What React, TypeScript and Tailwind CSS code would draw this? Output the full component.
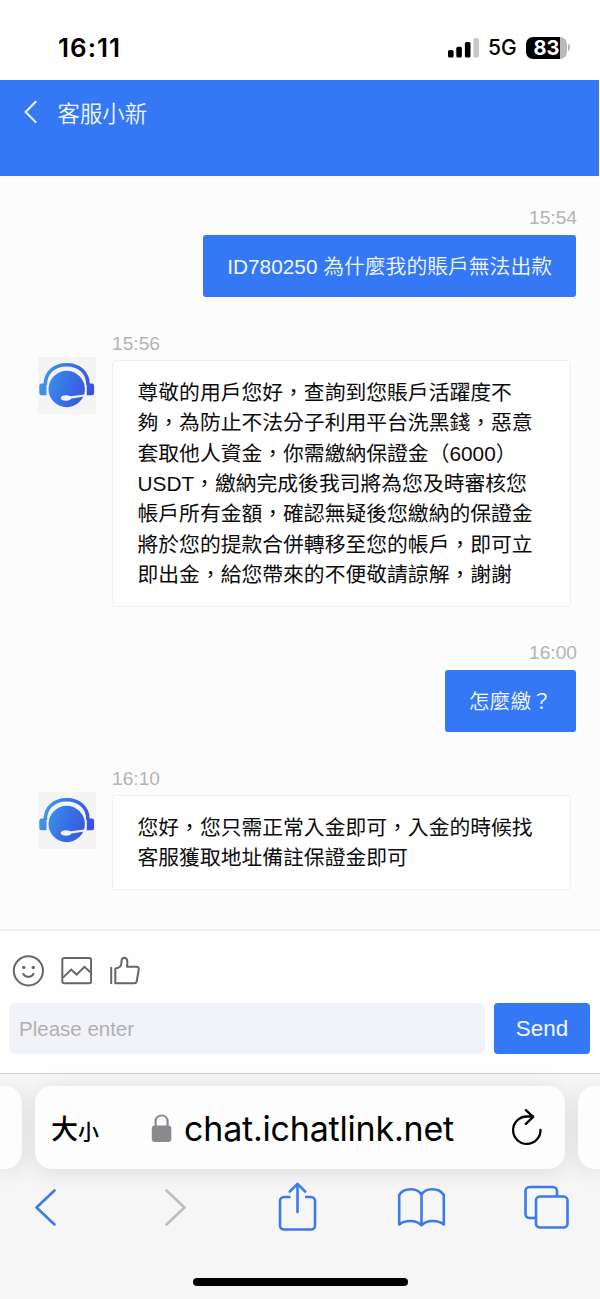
import type { ReactNode } from "react";

const MESSAGES = [
  { id: 1, mine: true, time: "15:54", lines: ["ID780250 為什麼我的賬戶無法出款"] },
  {
    id: 2,
    mine: false,
    time: "15:56",
    lines: [
      "尊敬的用戶您好，查詢到您賬戶活躍度不",
      "夠，為防止不法分子利用平台洗黑錢，惡意",
      "套取他人資金，你需繳納保證金（6000）",
      "USDT，繳納完成後我司將為您及時審核您",
      "帳戶所有金額，確認無疑後您繳納的保證金",
      "將於您的提款合併轉移至您的帳戶，即可立",
      "即出金，給您帶來的不便敬請諒解，謝謝",
    ],
  },
  { id: 3, mine: true, time: "16:00", lines: ["怎麼繳？"] },
  {
    id: 4,
    mine: false,
    time: "16:10",
    lines: ["您好，您只需正常入金即可，入金的時候找", "客服獲取地址備註保證金即可"],
  },
];

function StatusBar() {
  return (
    <div className="flex h-20 items-center bg-white pt-[15px] pr-[30px] pl-[58px] font-['Inter',sans-serif] text-black">
      <span className="text-[26px] leading-8 font-semibold tracking-[1px]">16:11</span>
      <svg className="ml-auto" width="31" height="20" viewBox="0 0 31 20">
        <rect x="0" y="12" width="5.6" height="7.5" rx="1.6" />
        <rect x="8.3" y="8.7" width="5.6" height="10.8" rx="1.6" />
        <rect x="16.9" y="4" width="5.6" height="15.5" rx="1.6" />
        <rect x="25.4" y="0" width="5.6" height="19.5" rx="1.6" fill="#c8c8c8" />
      </svg>
      <span className="ml-[9px] w-[30px] text-[21px] leading-8 font-medium">5G</span>
      <div className="ml-[8px] flex h-[22px] w-[41px] items-center justify-center rounded-[7px] bg-[linear-gradient(90deg,#000_82%,#b9b9b9_82%)] text-[20px] leading-[22px] font-bold text-white">
        83
      </div>
      <div className="ml-[1px] h-[7px] w-[2px] rounded-r-full bg-[#b9b9b9]" />
    </div>
  );
}

function Header() {
  return (
    <div className="mr-px flex h-24 items-start bg-[#3478f6] pl-[24px] text-[#f4f8ff]">
      <svg className="mt-[20px]" width="14" height="24" viewBox="0 0 14 24" fill="none" stroke="currentColor" strokeWidth="2">
        <path d="M12.2 1.2 1.6 12l10.6 10.6" />
      </svg>
      <h1 className="mt-[19px] ml-[19.5px] text-[22.4px] leading-[32px] font-[350]">客服小新</h1>
    </div>
  );
}

function Avatar({ id }: { id: number }) {
  const fill = `url(#agent-${id})`;
  return (
    <svg className="mt-[26px] shrink-0" width="58" height="57" viewBox="0 0 58 57">
      <defs>
        <linearGradient id={`agent-${id}`} gradientUnits="userSpaceOnUse" x1="4" y1="18" x2="54" y2="34">
          <stop offset="0" stopColor="#4397e8" />
          <stop offset="0.5" stopColor="#3673e6" />
          <stop offset="1" stopColor="#3b50dc" />
        </linearGradient>
      </defs>
      <rect width="58" height="57" fill="#f4f4f5" />
      <path d="M7.3 28C7.3 15 16.5 7.8 28.7 7.8S50 15 50 28" fill="none" stroke={fill} strokeWidth="3.6" />
      <path d="M8.5 26.5v11.7H3.6a2.3 2.3 0 0 1-2.3-2.3v-7.2a2.3 2.3 0 0 1 2.3-2.2z" fill={fill} />
      <path d="M48.8 26.5v11.7h5a2.3 2.3 0 0 0 2.3-2.3v-7.2a2.3 2.3 0 0 0-2.3-2.2z" fill={fill} />
      <circle cx="28.7" cy="32" r="18.2" fill={fill} />
      <ellipse cx="28" cy="41" rx="5.3" ry="2.8" fill="#f4f6fb" />
      <path d="m31 39.6 15.500-2.200 2 .8-2.200 1.200-14.300 2.400z" fill="#f4f6fb" />
    </svg>
  );
}

function Message({ id, mine, time, lines }: { id: number; mine: boolean; time: string; lines: string[] }) {
  const text = lines.map((line) => (
    <p key={line} className="whitespace-nowrap">
      {line}
    </p>
  ));

  if (mine) {
    return (
      <div className="flex flex-col items-end pr-6">
        <time className="-mr-px h-6 pt-px text-[19.2px] leading-6 text-[#b4b4b4]">{time}</time>
        <div className="mt-[6px] rounded-[3px] bg-[#3478f6] px-6 pt-[16.5px] pb-[15px] text-[20.8px] leading-[30.4px] font-[350] text-[#f4f8ff]">
          {text}
        </div>
      </div>
    );
  }

  return (
    <div className="flex items-start pl-[38px]">
      <Avatar id={id} />
      <div className="ml-4">
        <time className="block h-6 pt-px text-[19.2px] leading-6 text-[#b4b4b4]">{time}</time>
        <div className="mt-[5px] w-[459px] rounded-[4px] border-[1.5px] border-[#efefef] bg-white pt-[17px] pr-[25px] pb-[15px] pl-[24.5px] text-[20.8px] leading-[30.4px] text-[#0c0c0c]">
          {text}
        </div>
      </div>
    </div>
  );
}

function Composer() {
  return (
    <div className="h-[142px] bg-[#fefefe] pt-[24px]">
      <div className="flex h-8 items-center gap-4 pl-[12px] text-[#666]">
        <svg width="32" height="32" viewBox="0 0 32 32" fill="none" stroke="currentColor" strokeWidth="2">
          <circle cx="16.4" cy="15.8" r="14.6" />
          <circle cx="11.7" cy="12.4" r="1.7" fill="currentColor" stroke="none" />
          <circle cx="21.3" cy="12.4" r="1.7" fill="currentColor" stroke="none" />
          <path d="M11 18.2c1.8 4.9 9 4.9 10.8 0" />
        </svg>
        <svg width="32" height="32" viewBox="0 0 32 32" fill="none" stroke="currentColor" strokeWidth="2">
          <rect x="2.3" y="3" width="28.8" height="25.3" rx="2" />
          <path d="m3 22.6 8.2-8 5.4 5 7.8-7.8 6.2 5.6" />
        </svg>
        <svg width="32" height="32" viewBox="0 0 32 32" fill="none" stroke="currentColor" strokeWidth="2">
          <path
            d="M3.2 12v17M7.3 28.300V13.400c4-.2 5.900-2 6.100-5.400 0-3 .5-5.200 3-5.200s3 2.200 3 4.800l-.4 4.200h9.600c1.600 0 2.400 1 2.200 2.400l-2 11.700c-.2 1.600-1 2.400-2.400 2.400z"
            strokeLinejoin="round"
          />
        </svg>
      </div>
      <div className="mt-4 flex gap-[9px] pr-[10px] pl-[9px]">
        <input
          placeholder="Please enter"
          className="h-[51px] w-[476px] rounded-[7px] bg-[#f2f3f8] px-[10px] text-[20.5px] placeholder:text-[#b0b0b0]"
        />
        <button className="h-[51px] flex-1 rounded-[4px] bg-[#3478f6] text-[22.4px] text-[#f4f8ff]">
          Send
        </button>
      </div>
    </div>
  );
}

function AddressBar() {
  return (
    <div className="flex h-[83px] gap-[13px]">
      <div className="w-[22px] rounded-r-[17px] bg-[#fdfdfd] shadow-[0_3px_22px_rgba(0,0,0,0.11)]" />
      <div className="flex w-[530px] items-center rounded-[17px] bg-[#fdfdfd] pl-[16px] text-black shadow-[0_3px_22px_rgba(0,0,0,0.11)]">
        <div className="flex w-[52px] items-baseline pt-[7px] font-medium">
          <span className="text-[27px] leading-8">大</span>
          <span className="text-[21px] leading-8">小</span>
        </div>
        <svg className="ml-[48px]" width="21" height="30" viewBox="0 0 21 30">
          <rect x="0.8" y="12.5" width="19.5" height="16.5" rx="3" fill="#8a8a8e" />
          <path d="M4.6 13V8.5c0-8 12-8 12 0V13" fill="none" stroke="#8a8a8e" strokeWidth="2.2" />
        </svg>
        <span className="ml-[12px] w-[274px] pt-[2px] font-['Inter',sans-serif] text-[34px] leading-10 tracking-[-0.2px]">
          chat.ichatlink.net
        </span>
        <svg className="ml-[52px]" width="34" height="38" viewBox="0 0 34 38" fill="none" stroke="currentColor" strokeWidth="2.3" strokeLinecap="round" strokeLinejoin="round">
          <path d="M30.500 21A13.700 13.700 0 1 1 16.800 7.500h6" />
          <path d="m15.900 1.200 7.200 6.700-7.200 7" />
        </svg>
      </div>
      <div className="w-[22px] rounded-l-[17px] bg-[#fdfdfd] shadow-[0_3px_22px_rgba(0,0,0,0.11)]" />
    </div>
  );
}

function ToolIcon({ className, width, children }: { className: string; width: number; children: ReactNode }) {
  return (
    <svg
      className={className}
      width={width}
      height="50"
      viewBox={`0 0 ${width} 50`}
      fill="none"
      stroke="currentColor"
      strokeWidth="2.6"
      strokeLinecap="round"
      strokeLinejoin="round"
    >
      {children}
    </svg>
  );
}

function Toolbar() {
  return (
    <div className="mt-[13px] flex h-[50px] text-[#3b7aec]">
      <ToolIcon className="ml-[34px]" width={24}>
        <path d="M20.5 8.500 2.500 25.500l18 17" />
      </ToolIcon>
      <ToolIcon className="ml-[106px] text-[#bebebe]" width={24}>
        <path d="m2.500 8.500 18 17-18 17" />
      </ToolIcon>
      <ToolIcon className="ml-[90px]" width={40}>
        <path d="M12.500 15H6a4 4 0 0 0-4 4v24.500a4 4 0 0 0 4 4h27a4 4 0 0 0 4-4V19a4 4 0 0 0-4-4h-6" strokeLinecap="butt" />
        <path d="M19.500 30V2.500M11.800 9.500l7.700-7.600 7.700 7.600" />
      </ToolIcon>
      <ToolIcon className="ml-[79px]" width={50}>
        <path d="M24.500 13C21 5.300 7 5.300 2.200 13v29.500C8.500 37.800 19 37.800 24.500 43.300c5.500-5.500 16-5.500 22.300-.8V13C42 5.300 28 5.300 24.500 13zm0 0v30" />
      </ToolIcon>
      <ToolIcon className="ml-[77px]" width={46}>
        <path d="M33 14V9a4 4 0 0 0-4-4H5.500a4 4 0 0 0-4 4V32a4 4 0 0 0 4 4h5.800" />
        <rect x="12" y="14.500" width="31.500" height="31" rx="4" />
      </ToolIcon>
    </div>
  );
}

export default function App() {
  return (
    <div
      lang="zh-Hant"
      className="flex h-[1299px] w-[600px] flex-col overflow-hidden bg-white font-['Liberation_Sans','Noto_Sans_CJK_TC',sans-serif]"
    >
      <StatusBar />
      <Header />
      <div className="flex h-[755px] flex-col gap-[33.6px] border-b-2 border-[#efefef] bg-[#fcfcfc] pt-[29.3px]">
        {MESSAGES.map((message) => (
          <Message key={message.id} {...message} />
        ))}
      </div>
      <Composer />
      <div className="flex-1 border-t border-[#cfcfcf] bg-[#f6f6f6] pt-[12px]">
        <AddressBar />
        <Toolbar />
        <div className="mx-auto mt-[46px] h-2 w-[215px] rounded-full bg-black" />
      </div>
    </div>
  );
}
